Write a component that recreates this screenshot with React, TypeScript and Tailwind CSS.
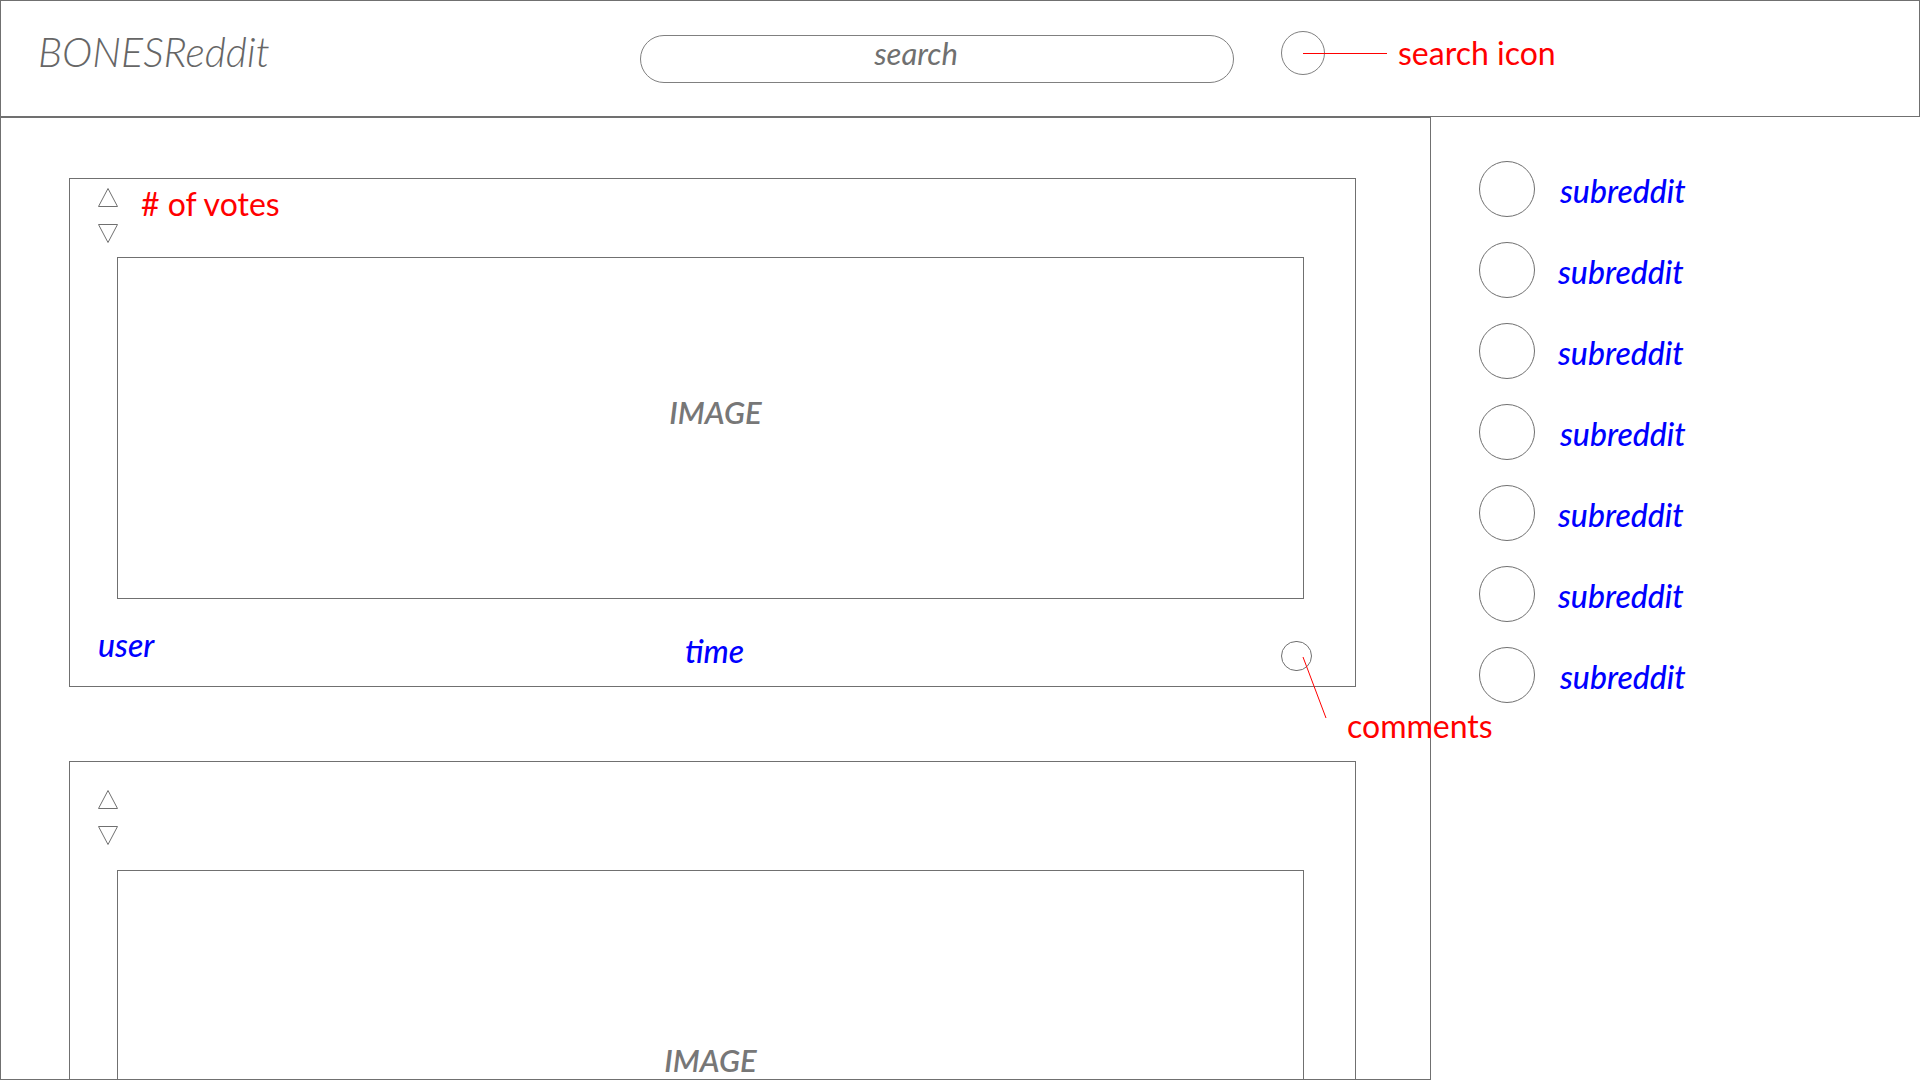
import React from 'react';

const Triangle = ({ down = false }: { down?: boolean }) => (
  <svg width="20" height="19" viewBox="0 0 20 19" className="block">
    <polygon
      points={down ? '0.5,0.5 19.5,0.5 10,18.5' : '0.5,18.5 19.5,18.5 10,0.5'}
      fill="none"
      stroke="#707070"
      strokeWidth="1"
    />
  </svg>
);

const Votes = ({ label }: { label?: string }) => (
  <div className="flex items-start pl-[28px]">
    <div className="flex flex-col gap-[17px]">
      <Triangle />
      <Triangle down />
    </div>
    {label && (
      <span className="ml-[23px] text-[32px] leading-none text-[#ff0000]">
        {label}
      </span>
    )}
  </div>
);

const App = () => {
  const subreddits = [25, 23, 23, 25, 23, 23, 25];

  return (
    <div className="relative w-[1920px] h-[1080px] overflow-hidden bg-white font-['Lato',sans-serif] text-[#707070]">
      {/* top bar */}
      <header className="flex items-start w-[1920px] h-[117px] border border-[#707070]">
        <div className="w-[639px] mt-[30px] pl-[37px] text-[41px] leading-none italic font-light text-[#666666]">
          BONESReddit
        </div>
        <div className="flex justify-center w-[594px] h-[48px] mt-[34px] pt-[2px] pr-[42px] rounded-full border border-[#808080] text-[31px] leading-none italic">
          search
        </div>
        <div className="relative w-[44px] h-[44px] mt-[30px] ml-[47px] rounded-full border border-[#808080]">
          <div className="absolute left-[21px] top-[21px] w-[84px] h-px bg-[#ff0000]" />
        </div>
        <span className="mt-[36px] ml-[73px] text-[32px] leading-none text-[#ff0000]">
          search icon
        </span>
      </header>

      <div className="flex">
        {/* feed */}
        <main className="w-[1431px] h-[963px] pl-[68px] pt-[60px] border border-[#707070]">
          <div className="w-[1287px] h-[509px] pt-[9px] border border-[#707070]">
            <Votes label="# of votes" />
            <div className="flex justify-center w-[1187px] h-[342px] ml-[47px] mt-[14px] pt-[139px] pl-[10px] border border-[#707070]">
              <span className="text-[31px] leading-none italic font-semibold text-[#777777]">
                IMAGE
              </span>
            </div>
            <div className="flex items-start h-[87px] pl-[28px] text-[32px] leading-none italic font-medium text-[#0000ff]">
              <span className="w-[587px] mt-[30px]">user</span>
              <span className="w-[596px] mt-[36px]">time</span>
              <div className="relative w-[31px] h-[30px] mt-[42px] rounded-full border border-[#707070]">
                <svg
                  width="50"
                  height="80"
                  className="absolute left-0 top-0 overflow-visible"
                >
                  <line x1="21" y1="15" x2="44" y2="76" stroke="#ff0000" strokeWidth="1" />
                </svg>
                <span className="absolute left-[65px] top-[68px] text-[32px] leading-none not-italic font-normal text-[#ff0000] whitespace-nowrap">
                  comments
                </span>
              </div>
            </div>
          </div>

          <div className="w-[1287px] h-[509px] mt-[74px] pt-[28px] border border-[#707070]">
            <Votes />
            <div className="flex justify-center w-[1187px] h-[342px] ml-[47px] mt-[25px] pt-[174px] border border-[#707070]">
              <span className="text-[31px] leading-none italic font-semibold text-[#777777]">
                IMAGE
              </span>
            </div>
          </div>
        </main>

        {/* subreddit list */}
        <aside className="flex flex-col gap-[25px] pl-[48px] pt-[44px]">
          {subreddits.map((gap, i) => (
            <div key={i} className="flex items-center">
              <div className="w-[56px] h-[56px] rounded-full border border-[#707070]" />
              <span
                className={`pt-[3px] text-[32px] leading-none italic font-medium text-[#0000ff] ${
                  gap === 25 ? 'ml-[25px]' : 'ml-[23px]'
                }`}
              >
                subreddit
              </span>
            </div>
          ))}
        </aside>
      </div>
    </div>
  );
};

export default App;
